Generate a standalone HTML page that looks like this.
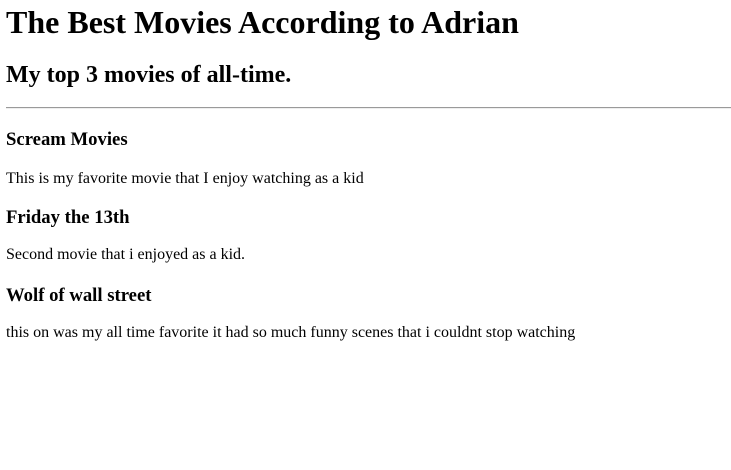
<!DOCTYPE html>
<html><head><meta charset="utf-8"><style>
html,body{margin:0;padding:0;background:#fff;width:731px;height:470px;overflow:hidden;position:relative;font-family:"Liberation Serif","Times New Roman",serif;color:#000}
.t{position:absolute;left:6px;white-space:nowrap;line-height:1}
.b{font-weight:bold}
hr{position:absolute;left:6px;right:0;top:107px;margin:0;border:0;border-top:1px solid #9a9a9a;border-bottom:1px solid #eee;height:0}
</style></head><body>
<div class="t b" style="font-size:32px;top:6px">The Best Movies According to Adrian</div>
<div class="t b" style="font-size:24px;top:63px">My top 3 movies of all-time.</div>
<hr>
<div class="t b" style="font-size:18.7px;top:131px">Scream Movies</div>
<div class="t" style="font-size:16px;top:171px">This is my favorite movie that I enjoy watching as a kid</div>
<div class="t b" style="font-size:18.7px;top:209px">Friday the 13th</div>
<div class="t" style="font-size:16px;top:247px">Second movie that i enjoyed as a kid.</div>
<div class="t b" style="font-size:18.7px;top:287px">Wolf of wall street</div>
<div class="t" style="font-size:16px;top:325px">this on was my all time favorite it had so much funny scenes that i couldnt stop watching</div>
</body></html>
